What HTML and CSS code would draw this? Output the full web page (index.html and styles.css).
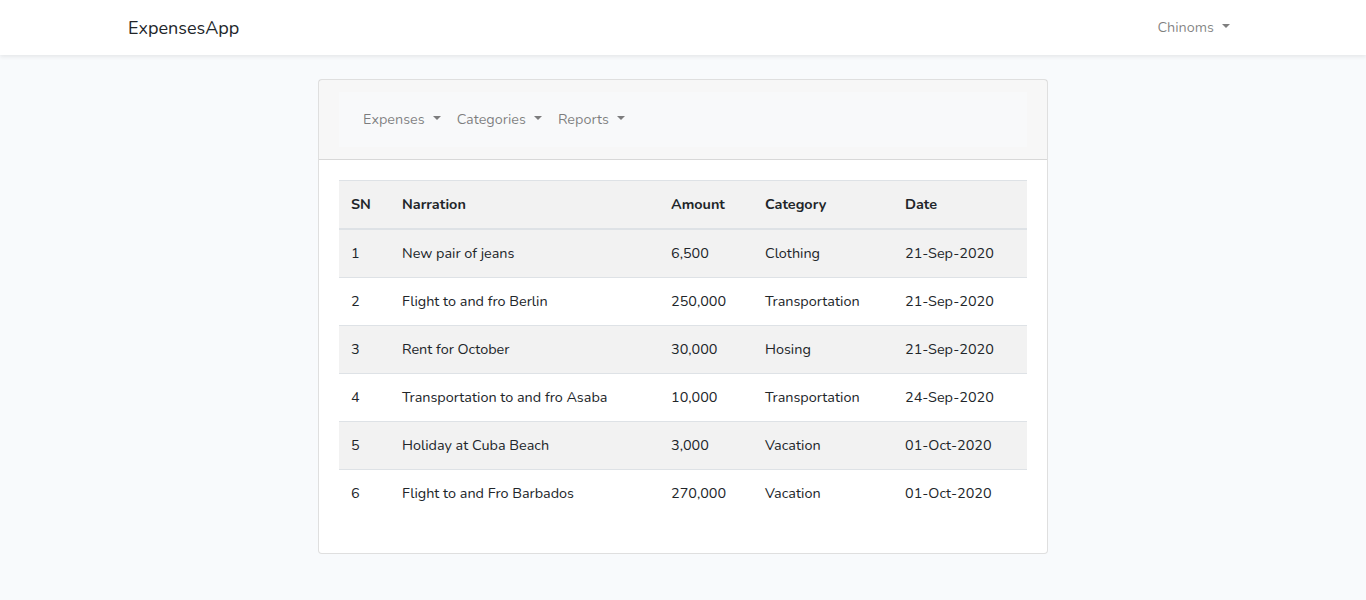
FILE: index.html
```html
<!DOCTYPE html>
<html lang="en">
<head>
<meta charset="utf-8">
<title>ExpensesApp</title>
<link rel="stylesheet" href="styles.css">
</head>
<body>
<nav class="topbar">
  <div class="container topbar-inner">
    <a class="brand" href="#">ExpensesApp</a>
    <a class="nav-link dropdown" href="#">Chinoms</a>
  </div>
</nav>
<main class="main">
  <div class="card">
    <div class="card-header">
      <div class="subnav">
        <a class="nav-link dropdown" href="#">Expenses</a>
        <a class="nav-link dropdown" href="#">Categories</a>
        <a class="nav-link dropdown" href="#">Reports</a>
      </div>
    </div>
    <div class="card-body">
      <table class="table">
        <colgroup>
          <col class="c1"><col class="c2"><col class="c3"><col class="c4"><col class="c5">
        </colgroup>
        <thead>
          <tr><th>SN</th><th>Narration</th><th>Amount</th><th>Category</th><th>Date</th></tr>
        </thead>
        <tbody>
          <tr><td>1</td><td>New pair of jeans</td><td>6,500</td><td>Clothing</td><td>21-Sep-2020</td></tr>
          <tr><td>2</td><td>Flight to and fro Berlin</td><td>250,000</td><td>Transportation</td><td>21-Sep-2020</td></tr>
          <tr><td>3</td><td>Rent for October</td><td>30,000</td><td>Hosing</td><td>21-Sep-2020</td></tr>
          <tr><td>4</td><td>Transportation to and fro Asaba</td><td>10,000</td><td>Transportation</td><td>24-Sep-2020</td></tr>
          <tr><td>5</td><td>Holiday at Cuba Beach</td><td>3,000</td><td>Vacation</td><td>01-Oct-2020</td></tr>
          <tr><td>6</td><td>Flight to and Fro Barbados</td><td>270,000</td><td>Vacation</td><td>01-Oct-2020</td></tr>
        </tbody>
      </table>
    </div>
  </div>
</main>
</body>
</html>
```
FILE: styles.css
```css
* { box-sizing: border-box; }
html, body { margin: 0; }
body {
  background: #f8fafc;
  font-family: "Nunito", "Lato", "Noto Sans", sans-serif;
  font-size: 14.4px;
  line-height: 1.6;
  color: #212529;
}
a { text-decoration: none; }

.topbar {
  background: #fff;
  box-shadow: 0 2px 4px rgba(0,0,0,.075);
  padding: 8px 0;
  height: 55px;
}
.container {
  width: 1140px;
  margin: 0 auto;
  padding: 0 15px;
}
.topbar-inner {
  display: flex;
  align-items: center;
  justify-content: space-between;
  height: 39px;
}
.brand {
  color: #212529;
  font-size: 18px;
  line-height: 28px;
}
.nav-link {
  color: rgba(0,0,0,.5);
  padding: 8px;
  display: inline-block;
}
.dropdown::after {
  content: "";
  display: inline-block;
  margin-left: 8px;
  vertical-align: .255em;
  border-top: .3em solid;
  border-right: .3em solid transparent;
  border-left: .3em solid transparent;
  border-bottom: 0;
}

.main { padding: 24px 0; }
.card {
  width: 730px;
  margin: 0 auto;
  background: #fff;
  border: 1px solid rgba(0,0,0,.125);
  border-radius: 4px;
}
.card-header {
  background: rgba(0,0,0,.03);
  border-bottom: 1px solid rgba(0,0,0,.125);
  padding: 12px 20px;
}
.subnav {
  background: #f8f9fa;
  padding: 8px 16px;
  display: flex;
}
.card-body { padding: 20px; }
.table {
  width: 100%;
  border-collapse: collapse;
  margin-bottom: 16px;
}
.c1 { width: 51px; }
.c2 { width: 269px; }
.c3 { width: 94px; }
.c4 { width: 140px; }
.c5 { width: 134px; }
.table th, .table td {
  padding: 12px;
  text-align: left;
  vertical-align: top;
  border-top: 1px solid #dee2e6;
}
.table th {
  font-weight: 700;
  border-bottom: 2px solid #dee2e6;
  background: #f2f2f2;
}
.table tbody tr:nth-of-type(odd) { background: rgba(0,0,0,.05); }
```
